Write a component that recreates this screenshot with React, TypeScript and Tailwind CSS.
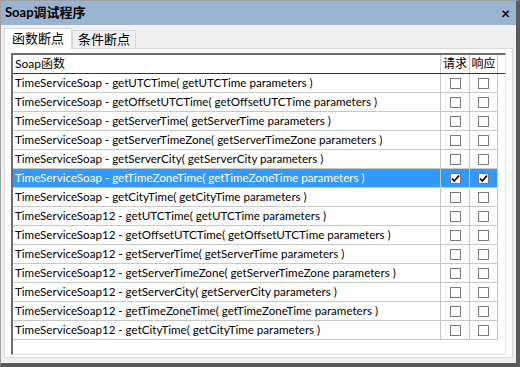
import { useState } from "react";

const rows = [
  "TimeServiceSoap - getUTCTime( getUTCTime parameters )",
  "TimeServiceSoap - getOffsetUTCTime( getOffsetUTCTime parameters )",
  "TimeServiceSoap - getServerTime( getServerTime parameters )",
  "TimeServiceSoap - getServerTimeZone( getServerTimeZone parameters )",
  "TimeServiceSoap - getServerCity( getServerCity parameters )",
  "TimeServiceSoap - getTimeZoneTime( getTimeZoneTime parameters )",
  "TimeServiceSoap - getCityTime( getCityTime parameters )",
  "TimeServiceSoap12 - getUTCTime( getUTCTime parameters )",
  "TimeServiceSoap12 - getOffsetUTCTime( getOffsetUTCTime parameters )",
  "TimeServiceSoap12 - getServerTime( getServerTime parameters )",
  "TimeServiceSoap12 - getServerTimeZone( getServerTimeZone parameters )",
  "TimeServiceSoap12 - getServerCity( getServerCity parameters )",
  "TimeServiceSoap12 - getTimeZoneTime( getTimeZoneTime parameters )",
  "TimeServiceSoap12 - getCityTime( getCityTime parameters )",
];

const CheckBox = ({ checked }: { checked: boolean }) => (
  <div className="w-[11px] h-[11px] border border-[#7a7a7a] bg-white flex items-center justify-center">
    {checked && (
      <svg width="9" height="9" viewBox="0 0 9 9">
        <path d="M1 4.5 L3.3 7 L8 1.5" stroke="#000" strokeWidth="1.8" fill="none" />
      </svg>
    )}
  </div>
);

const App = () => {
  const [tab, setTab] = useState(0);
  const selected = 5;

  return (
    <div
      className="w-[520px] h-[367px] bg-[#f0f0f0] border-l border-t border-[#a0a0a0] border-r-4 border-b-4 border-r-[#5a5a5a] border-b-[#5a5a5a] flex flex-col text-[12px] text-black overflow-hidden"
      style={{ fontFamily: 'Lato, "Noto Sans CJK SC", sans-serif' }}
    >
      <div className="h-[24px] bg-[#99b4d1] flex items-center justify-between pl-[4px] pr-[6px] shrink-0">
        <span className="font-bold text-[13px]">Soap调试程序</span>
        <span className="text-[15px] leading-none font-bold">×</span>
      </div>

      <div className="flex items-end px-[3px] h-[22px] mt-[1px] shrink-0">
        {["函数断点", "条件断点"].map((t, i) => (
          <div
            key={t}
            onClick={() => setTab(i)}
            className={
              tab === i
                ? "h-[21px] px-[7px] flex items-center bg-white border border-b-0 border-[#d9d9d9] text-[13px] relative top-[1px] z-10"
                : "h-[18px] px-[5px] flex items-center bg-[#f0f0f0] border border-b-0 border-[#d9d9d9] text-[13px]"
            }
          >
            {t}
          </div>
        ))}
      </div>

      <div className="flex-1 mx-[3px] mb-[5px] bg-white border border-[#d9d9d9] pt-[4px] px-[6px] pb-[2px] flex">
        <div className="flex-1 border-l-2 border-t-2 border-[#6d6d6d] border-r border-b border-r-[#e3e3e3] border-b-[#e3e3e3] bg-white flex flex-col">
          <div className="flex h-[19px] border-b border-[#333]">
            <div className="flex-1 pl-[2px] flex items-center">Soap函数</div>
            <div className="w-[29px] border-l border-[#c8c8c8] flex items-center justify-center">请求</div>
            <div className="w-[29px] border-l border-r border-[#c8c8c8] flex items-center justify-center">响应</div>
            <div className="w-[7px]" />
          </div>
          {rows.map((r, i) => {
            const sel = i === selected;
            return (
              <div key={r} className={`flex h-[19px] ${sel ? "bg-[#3399ff]" : ""}`}>
                <div className={`flex-1 pl-[2px] flex items-center whitespace-nowrap overflow-hidden border-b border-[#c8c8c8] text-[11.6px] ${sel ? "text-white" : ""}`}>
                  {r}
                </div>
                <div className="w-[29px] border-l border-b border-[#c8c8c8] flex items-center justify-center">
                  <CheckBox checked={sel} />
                </div>
                <div className="w-[29px] border-l border-r border-b border-[#c8c8c8] flex items-center justify-center">
                  <CheckBox checked={sel} />
                </div>
                <div className="w-[7px] bg-white" />
              </div>
            );
          })}
        </div>
      </div>
    </div>
  );
};

export default App;
